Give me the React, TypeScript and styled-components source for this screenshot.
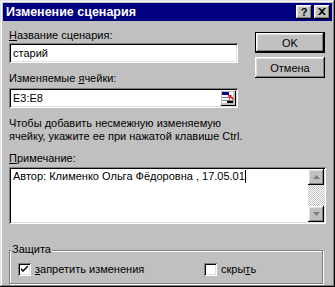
import React from "react";
import styled, { createGlobalStyle } from "styled-components";

const GlobalStyle = createGlobalStyle`
  html, body {
    margin: 0;
    padding: 0;
    background: #c0c0c0;
  }
  body {
    font-family: "Liberation Sans", Arial, sans-serif;
    font-size: 11px;
    color: #000;
  }
`;

const raised = `inset -1px -1px #000, inset 1px 1px #fff, inset -2px -2px #808080, inset 2px 2px #dfdfdf`;
const sunken = `inset 1px 1px #808080, inset -1px -1px #fff, inset 2px 2px #000, inset -2px -2px #dfdfdf`;

const Window = styled.div`
  width: 335px;
  height: 287px;
  box-sizing: border-box;
  padding: 3px;
  background: #c0c0c0;
  box-shadow: inset -1px -1px #000, inset 1px 1px #dfdfdf, inset -2px -2px #808080,
    inset 2px 2px #fff;
  display: flex;
  flex-direction: column;
`;

const TitleBar = styled.div`
  height: 18px;
  background: #000080;
  color: #fff;
  display: flex;
  align-items: center;
  justify-content: space-between;
  padding: 0 2px 0 3px;
`;

const Title = styled.span`
  font-weight: bold;
  font-size: 12.5px;
`;

const TitleButtons = styled.div`
  display: flex;
  gap: 2px;
`;

const TitleButton = styled.div`
  width: 16px;
  height: 14px;
  box-sizing: border-box;
  background: #c0c0c0;
  box-shadow: ${raised};
  display: flex;
  align-items: center;
  justify-content: center;
  color: #000;
  font-weight: bold;
  font-size: 11px;
  padding-bottom: 1px;
`;

const Body = styled.div`
  padding: 8px 6px 0 6px;
  display: flex;
  flex-direction: column;
`;

const TopArea = styled.div`
  display: flex;
  justify-content: space-between;
`;

const LeftCol = styled.div`
  width: 229px;
  display: flex;
  flex-direction: column;
`;

const RightCol = styled.div`
  display: flex;
  flex-direction: column;
  gap: 4px;
  padding-top: 3px;
  margin-right: 1px;
`;

const Label = styled.div<{ $mt?: number }>`
  line-height: 13px;
  margin-top: ${(p) => p.$mt ?? 0}px;
  white-space: nowrap;
`;

const Key = styled.span`
  text-decoration: underline;
`;

const Field = styled.div<{ $mt?: number }>`
  height: 20px;
  box-sizing: border-box;
  margin-top: ${(p) => p.$mt ?? 0}px;
  background: #fff;
  box-shadow: ${sunken};
  padding: 0 2px 0 4px;
  display: flex;
  align-items: center;
  justify-content: space-between;
`;

const Hint = styled.div`
  line-height: 13px;
  margin-top: 9px;
  white-space: nowrap;
`;

const PushButton = styled.div<{ $default?: boolean }>`
  width: 70px;
  height: 21px;
  box-sizing: border-box;
  background: #c0c0c0;
  display: flex;
  align-items: center;
  justify-content: center;
  box-shadow: ${(p) =>
    p.$default
      ? `inset 0 0 0 1px #000, inset -2px -2px #000, inset 2px 2px #fff, inset -3px -3px #808080, inset 3px 3px #dfdfdf`
      : raised};
`;

const Notes = styled.div`
  margin-top: 2px;
  height: 57px;
  box-sizing: border-box;
  background: #fff;
  box-shadow: ${sunken};
  padding: 2px;
  display: flex;
`;

const NotesText = styled.div`
  flex: 1;
  padding: 1px 2px;
  line-height: 13px;
  white-space: nowrap;
`;

const Caret = styled.span`
  display: inline-block;
  width: 1px;
  height: 13px;
  background: #000;
  vertical-align: top;
`;

const ScrollBar = styled.div`
  width: 16px;
  display: flex;
  flex-direction: column;
`;

const ScrollButton = styled.div`
  width: 16px;
  height: 16px;
  box-sizing: border-box;
  background: #c0c0c0;
  box-shadow: ${raised};
  display: flex;
  align-items: center;
  justify-content: center;
`;

const ScrollTrack = styled.div`
  flex: 1;
  background: repeating-conic-gradient(#c0c0c0 0 25%, #fff 0 50%) 0 0 / 2px 2px;
`;

const Group = styled.div`
  position: relative;
  margin: 26px 3px 0 0;
  height: 34px;
  box-sizing: border-box;
  border: 1px solid #808080;
  box-shadow: 1px 1px #fff, inset 1px 1px #fff;
  display: flex;
  align-items: center;
  padding: 4px 0 0 8px;
`;

const Legend = styled.span`
  position: absolute;
  top: -8px;
  left: 1px;
  padding: 0 1px;
  background: #c0c0c0;
  line-height: 13px;
`;

const CheckItem = styled.div<{ $width?: number }>`
  display: flex;
  align-items: center;
  gap: 4px;
  width: ${(p) => (p.$width ? `${p.$width}px` : "auto")};
`;

const CheckBox = styled.div`
  width: 13px;
  height: 13px;
  box-sizing: border-box;
  background: #fff;
  box-shadow: ${sunken};
  display: flex;
  align-items: center;
  justify-content: center;
`;

const CellRefIcon = () => (
  <svg width="16" height="16" viewBox="0 0 16 16">
    <rect x="0" y="0" width="16" height="16" fill="#c0c0c0" />
    <rect x="0" y="0" width="15" height="1" fill="#fff" />
    <rect x="0" y="0" width="1" height="15" fill="#fff" />
    <rect x="1" y="15" width="15" height="1" fill="#000" />
    <rect x="15" y="1" width="1" height="15" fill="#000" />
    <rect x="2" y="2" width="11" height="11" fill="#fff" />
    <rect x="2" y="2" width="7" height="3" fill="#000080" />
    <rect x="2" y="7" width="11" height="1" fill="#808080" />
    <rect x="2" y="10" width="11" height="1" fill="#808080" />
    <rect x="9" y="5" width="1" height="8" fill="#808080" />
    <rect x="7" y="11" width="6" height="2" fill="#000" />
    <path d="M8 5 L12 5 L11 6 L14 9 L13 10 L10 7 L9 8 Z" fill="#ff0000" />
  </svg>
);

const UpArrow = () => (
  <svg width="7" height="4" viewBox="0 0 7 4">
    <path d="M3.5 0 L7 4 L0 4 Z" fill="#808080" />
  </svg>
);

const DownArrow = () => (
  <svg width="7" height="4" viewBox="0 0 7 4">
    <path d="M0 0 L7 0 L3.5 4 Z" fill="#808080" />
  </svg>
);

const CheckMark = () => (
  <svg width="7" height="7" viewBox="0 0 7 7">
    <path d="M0 2 L0 4 L2 6 L7 1 L7 -1 L2 4 Z" fill="#000" />
  </svg>
);

const CloseGlyph = () => (
  <svg width="8" height="7" viewBox="0 0 8 7">
    <path d="M0 0 H2 L4 2 L6 0 H8 L5 3.5 L8 7 H6 L4 5 L2 7 H0 L3 3.5 Z" fill="#000" />
  </svg>
);

export default function App() {
  return (
    <>
      <GlobalStyle />
      <Window>
        <TitleBar>
          <Title>Изменение сценария</Title>
          <TitleButtons>
            <TitleButton>?</TitleButton>
            <TitleButton>
              <CloseGlyph />
            </TitleButton>
          </TitleButtons>
        </TitleBar>
        <Body>
          <TopArea>
            <LeftCol>
              <Label>
                <Key>Н</Key>азвание сценария:
              </Label>
              <Field $mt={1}>старий</Field>
              <Label $mt={9}>
                Изменяемые <Key>я</Key>чейки:
              </Label>
              <Field $mt={3}>
                <span>E3:E8</span>
                <CellRefIcon />
              </Field>
              <Hint>
                Чтобы добавить несмежную изменяемую
                <br />
                ячейку, укажите ее при нажатой клавише Ctrl.
              </Hint>
            </LeftCol>
            <RightCol>
              <PushButton $default>OK</PushButton>
              <PushButton>Отмена</PushButton>
            </RightCol>
          </TopArea>
          <Label $mt={9}>
            <Key>П</Key>римечание:
          </Label>
          <Notes>
            <NotesText>
              Автор: Клименко Ольга Фёдоровна , 17.05.01
              <Caret />
            </NotesText>
            <ScrollBar>
              <ScrollButton>
                <UpArrow />
              </ScrollButton>
              <ScrollTrack />
              <ScrollButton>
                <DownArrow />
              </ScrollButton>
            </ScrollBar>
          </Notes>
          <Group>
            <Legend>Защита</Legend>
            <CheckItem $width={186}>
              <CheckBox>
                <CheckMark />
              </CheckBox>
              <span>
                <Key>з</Key>апретить изменения
              </span>
            </CheckItem>
            <CheckItem>
              <CheckBox />
              <span>
                скры<Key>т</Key>ь
              </span>
            </CheckItem>
          </Group>
        </Body>
      </Window>
    </>
  );
}
